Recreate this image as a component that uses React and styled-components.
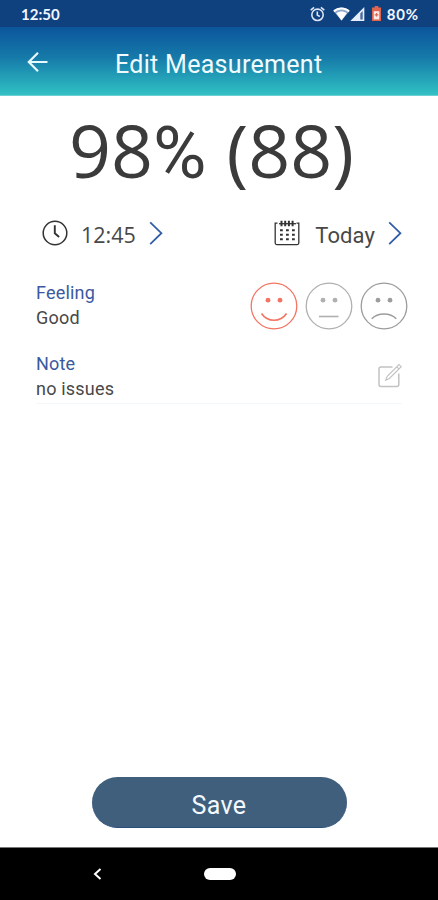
import React from 'react'
import styled, { createGlobalStyle } from 'styled-components';

const GlobalStyle = createGlobalStyle`
* { box-sizing: border-box; }
body {
margin: 0;
background: #fff;
}
svg { display: block; flex: none; }
`;

const Screen = styled.div`
width: 438px;
height: 900px;
display: flex;
flex-direction: column;
overflow: hidden;
background: #fff;
color: #484848;
font-family: Roboto, sans-serif;
`;

const StatusBar = styled.div`
height: 27px;
padding: 0 20px 0 21px;
display: flex;
align-items: center;
justify-content: space-between;
background: #10417f;
color: #f2f6ff;
font-family: Lato, sans-serif;
font-size: 15px;
font-weight: 700;
line-height: 26px;
`;

const StatusIcons = styled.div`
display: flex;
align-items: center;
`;

const IconSlot = styled.span`
margin-right: ${props => props.$gap}px;
`;

const BatteryText = styled.span`
letter-spacing: 0.8px;
margin-right: -0.8px;
`;

const Header = styled.header`
height: 69px;
padding: 2px 0 0 26px;
display: flex;
align-items: center;
background: linear-gradient(#0b559c, #167aa9 45%, #2cb7c0 92%, #35c0c4);
border-bottom: 1px solid #6dd0d4;
color: #f0fbff;
`;

const Title = styled.h1`
margin: 5px 0 0 66px;
font-size: 25px;
font-weight: 400;
line-height: 30px;
letter-spacing: 0.3px;
`;

const Reading = styled.div`
height: 112px;
padding: 4px 0 0 69px;
color: #3b3b3b;
font-family: "Open Sans", sans-serif;
font-size: 73.5px;
line-height: 100px;
white-space: pre;
`;

const Percent = styled.span`
margin-right: 1px;
font-family: Roboto, sans-serif;
font-size: 73px;
line-height: 0;
`;

const PickerRow = styled.div`
height: 50px;
padding: 0 36px 0 42px;
display: flex;
justify-content: space-between;
align-items: center;
`;

const Picker = styled.button`
padding: 0;
border: 0;
background: none;
display: flex;
align-items: center;
color: #484848;
`;

const PickerText = styled.span`
margin: ${props => props.$top}px 13px 0 ${props => props.$left}px;
font-family: ${props => props.$family}, sans-serif;
font-size: ${props => props.$size}px;
line-height: 30px;
letter-spacing: ${props => props.$spacing}px;
`;

const Field = styled.div`
height: ${props => props.$height}px;
margin: ${props => props.$top || 0}px ${props => props.$right}px 0 36px;
display: flex;
justify-content: space-between;
border-bottom: 1px solid ${props => props.$line || 'transparent'};
`;

const Label = styled.div`
color: #3a59a0;
font-size: 18px;
line-height: 25px;
letter-spacing: 0.2px;
`;

const Value = styled.div`
font-size: 18px;
line-height: 25px;
letter-spacing: 0.2px;
`;

const Faces = styled.div`
display: flex;
gap: 7px;
padding-top: 2px;
`;

const EditBox = styled.div`
padding-top: 12px;
`;

const Footer = styled.div`
flex: 1;
display: flex;
align-items: flex-end;
justify-content: center;
padding-bottom: 19px;
`;

const SaveButton = styled.button`
width: 255px;
height: 51px;
padding: 7px 0 0;
border: 0;
border-bottom: 1px solid #2a4f7c;
border-radius: 26px;
background: #405f7c;
color: #f4f9ff;
font-family: Roboto, sans-serif;
font-size: 25px;
letter-spacing: 0.4px;
`;

const NavBar = styled.div`
height: 53px;
padding-left: 92px;
display: flex;
align-items: center;
background: #000;
border-top: 1px solid #777;
`;

const HomePill = styled.div`
width: 32px;
height: 12px;
margin-left: 101.500px;
border-radius: 6px;
background: #fff;
`;

const AlarmIcon = () => (
  <svg width="15" height="16" viewBox="0 0 15 16" fill="none" stroke="#dce6f5" strokeWidth="1.6">
    <circle cx="7.5" cy="8.8" r="5.7" />
    <path d="M7.3 5.5v3.6l2.5 1.4M.7 4.2l3.400-2.900M14.300 4.200l-3.400-2.900" />
  </svg>
)

const WifiIcon = () => (
  <svg width="17" height="14" viewBox="0 0 17 14">
    <path d="M.3 3.7C5-.7 12-.7 16.7 3.7L8.5 13.6z" fill="#8fa8cb" />
    <path d="M.3 3.7C5-.7 12-.7 16.7 3.7L15.4 5.2C11.5 1.6 5.5 1.6 1.6 5.2z" fill="#fff" />
    <path d="M3.2 6.3c3-2.5 7.6-2.5 10.6 0L8.5 13.6z" fill="#fff" />
  </svg>
)

const SignalIcon = () => (
  <svg width="15" height="14" viewBox="0 0 15 14">
    <path d="M14.3 0v14H.3z" fill="#e6edf8" />
    <path d="M12.7 4v8.6h-2.4V6.4z" fill="#4b6b9d" />
  </svg>
)

const BatteryIcon = () => (
  <svg width="9" height="15" viewBox="0 0 9 15">
    <path d="M2.7 0h3.6v1.5H9V15H0V1.5h2.7z" fill="#df654f" />
    <path d="M1.7 5.2h5.6v8.2H1.7z" fill="#f9e9e8" />
    <path d="M4.5 7v3.600M2.700 8.800h3.600" stroke="#df654f" strokeWidth="1.2" />
  </svg>
)

const BackIcon = () => (
  <svg width="23" height="22" viewBox="0 0 23 22" fill="none" stroke="#e8f8ff" strokeWidth="2.2">
    <path d="M21.500 11H3M12 1.800L2.800 11l9.200 9.200" />
  </svg>
)

const ClockIcon = () => (
  <svg width="26" height="26" viewBox="0 0 26 26" fill="none" stroke="#333">
    <circle cx="13" cy="13" r="11.8" strokeWidth="1.5" />
    <path d="M12.8 5.3v8l4.3 3.7" strokeWidth="1.9" />
  </svg>
)

const CalendarIcon = () => (
  <svg width="26" height="26" viewBox="0 0 26 26" fill="none" stroke="#333">
    <path d="M3.5 3.2H1.2v19.9q0 1.500 1.500 1.500h20.6q1.500 0 1.500-1.500V3.2h-2.3" strokeWidth="1.3" />
    <path d="M5 3.7h17" strokeWidth="1.3" />
    <path d="M7.500 .8v5.500M11.200 .8v5.500M14.900 .8v5.500M18.600 .8v5.500" strokeWidth="2" />
    <path d="M6 10.200h15M6 14.800h15M6 19.200h15" strokeWidth="2.1" strokeDasharray="2.800 3.200" />
  </svg>
)

const Chevron = () => (
  <svg width="14" height="24" viewBox="0 0 14 24" fill="none" stroke="#315da7" strokeWidth="1.8">
    <path d="M1.200 1.300L12.400 12.200 1.200 23.100" />
  </svg>
)

const Face = ({ color, mouth }) => (
  <svg width="48" height="48" viewBox="0 0 48 48" fill="none" stroke={color}>
    <circle cx="24" cy="24" r="22.8" strokeWidth="1.3" />
    <circle cx="18" cy="18.2" r="2.4" fill={color} stroke="none" />
    <circle cx="30" cy="18.2" r="2.4" fill={color} stroke="none" />
    <path d={mouth} strokeWidth="1.6" />
  </svg>
)

const EditIcon = () => (
  <svg width="26" height="26" viewBox="0 0 26 26" fill="none" stroke="#c2c2c2" strokeWidth="1.5">
    <path d="M16.500 4H5Q3 4 3 6v15.500q0 2 2 2h15.800q2 0 2-2V10.500" />
    <path d="M9.700 17.200l1.500-3.900L23 1.500l2.200 2.200L13.400 15.500zM20.700 3.700l2.300 2.300" strokeWidth="1.1" />
  </svg>
)

const App = () => {
  return (
    <Screen>
      <GlobalStyle />
      <StatusBar>
        <span>12:50</span>
        <StatusIcons>
          <IconSlot $gap={8}><AlarmIcon /></IconSlot>
          <IconSlot $gap={0}><WifiIcon /></IconSlot>
          <IconSlot $gap={7}><SignalIcon /></IconSlot>
          <IconSlot $gap={6}><BatteryIcon /></IconSlot>
          <BatteryText>80%</BatteryText>
        </StatusIcons>
      </StatusBar>
      <Header>
        <BackIcon />
        <Title>Edit Measurement</Title>
      </Header>
      <Reading>98<Percent>%</Percent> (88)</Reading>
      <PickerRow>
        <Picker>
          <ClockIcon />
          <PickerText $top={4} $left={13} $family='"Open Sans"' $size={21.5} $spacing={0}>12:45</PickerText>
          <Chevron />
        </Picker>
        <Picker>
          <CalendarIcon />
          <PickerText $top={5} $left={15} $family="Roboto" $size={22} $spacing={0.1}>Today</PickerText>
          <Chevron />
        </Picker>
      </PickerRow>
      <Field $height={71} $top={22} $right={30}>
        <div>
          <Label>Feeling</Label>
          <Value>Good</Value>
        </div>
        <Faces>
          <Face color="#f47463" mouth="M11.500 31.500c6 9 19 9 25 0" />
          <Face color="#b0b0b0" mouth="M14 34.500h19.500" />
          <Face color="#9d9d9d" mouth="M11.700 36.800c6-6.500 18.600-6.500 24.600 0" />
        </Faces>
      </Field>
      <Field $height={53} $right={36} $line="#f5f8fa">
        <div>
          <Label>Note</Label>
          <Value>no issues</Value>
        </div>
        <EditBox>
          <EditIcon />
        </EditBox>
      </Field>
      <Footer>
        <SaveButton>Save</SaveButton>
      </Footer>
      <NavBar>
        <svg width="10" height="14" viewBox="0 0 10 14" fill="none" stroke="#fff" strokeWidth="2">
          <path d="M8.500 2L3 7l5.500 5" />
        </svg>
        <HomePill />
      </NavBar>
    </Screen>
  )
}

export default App
